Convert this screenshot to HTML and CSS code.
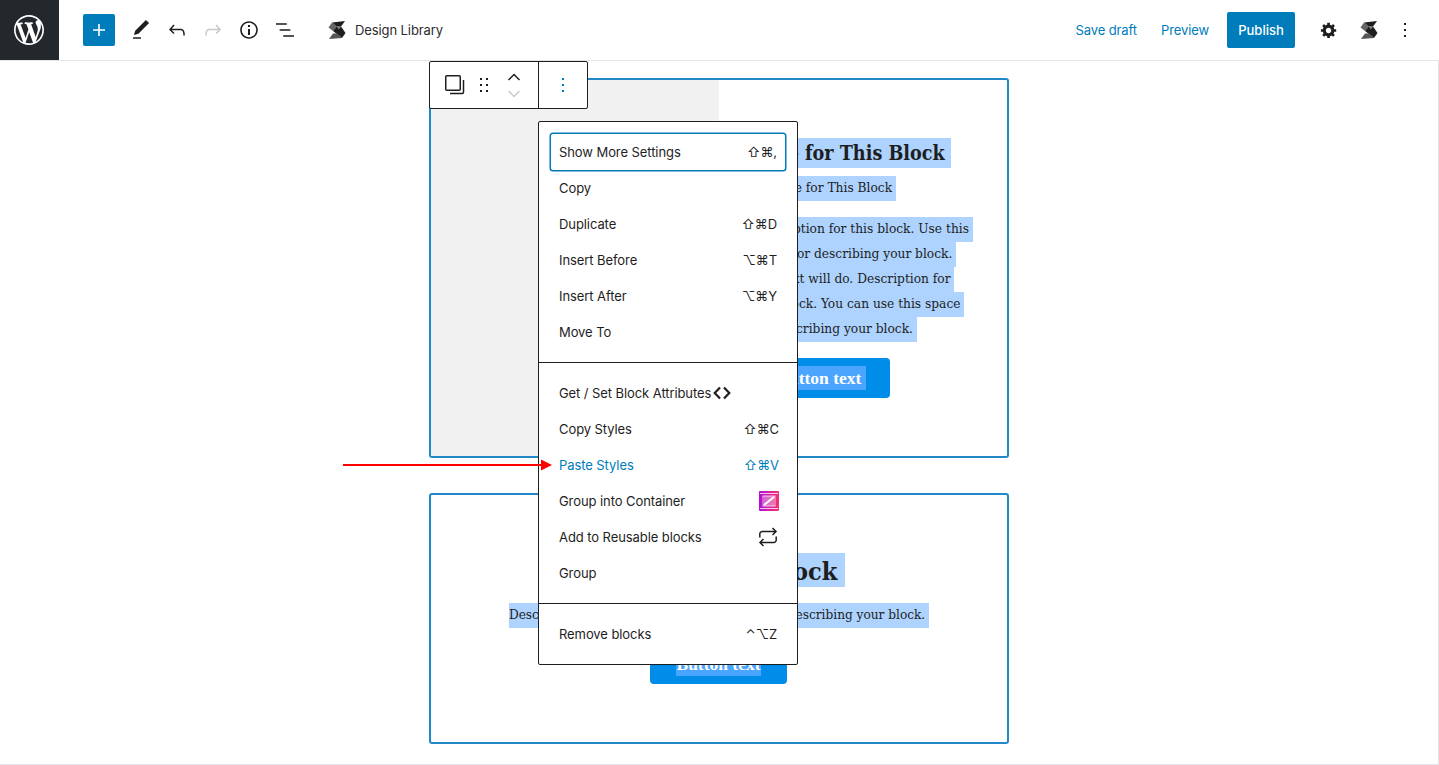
FILE: index.html
```html
<!DOCTYPE html>
<html lang="en">
<head>
<meta charset="utf-8">
<title>Design Library</title>
<link rel="stylesheet" href="styles.css">
</head>
<body>
<div class="app">
  <header class="topbar">
    <div class="bar-left">
      <div class="wp-logo">
        <svg width="30" height="30" viewBox="0 0 20 20" fill="#fff"><path d="M20 10c0-5.51-4.49-10-10-10C4.48 0 0 4.49 0 10c0 5.52 4.48 10 10 10 5.51 0 10-4.48 10-10zM7.78 15.37L4.37 6.22c.55-.02 1.17-.08 1.17-.08.5-.06.44-1.13-.06-1.11 0 0-1.45.11-2.37.11-.18 0-.37 0-.58-.01C4.12 2.69 6.87 1.11 10 1.11c2.33 0 4.45.87 6.05 2.34-.68-.11-1.65.39-1.65 1.58 0 .74.45 1.36.9 2.1.35.61.55 1.36.55 2.46 0 1.49-1.4 5-1.4 5l-3.03-8.37c.54-.02.82-.17.82-.17.5-.05.44-1.25-.06-1.22 0 0-1.44.12-2.38.12-.87 0-2.33-.12-2.33-.12-.5-.03-.56 1.2-.06 1.22l.92.08 1.26 3.41zM17.41 10c.24-.64.74-1.87.43-4.25.7 1.29 1.05 2.71 1.05 4.25 0 3.29-1.73 6.24-4.4 7.78.97-2.59 1.94-5.2 2.92-7.78zM6.1 18.09C3.12 16.65 1.11 13.53 1.11 10c0-1.3.23-2.48.72-3.59C3.25 10.3 4.67 14.2 6.1 18.09zm4.03-6.63l2.58 6.98c-.86.29-1.76.45-2.71.45-.79 0-1.57-.11-2.29-.33.81-2.38 1.62-4.74 2.42-7.1z"/></svg>
      </div>
      <div class="tools">
        <button class="add-btn"><svg width="24" height="24" viewBox="0 0 24 24" fill="#fff"><path d="M18 11.2h-5.2V6h-1.6v5.2H6v1.6h5.2V18h1.6v-5.2H18z"/></svg></button>
        <button class="tool"><svg width="24" height="24" viewBox="0 0 24 24" fill="#1e1e1e"><path d="M20.1 5.1L16.9 2 6.2 12.7l-1.3 4.4 4.5-1.3L20.1 5.1zM4 20.8h8v-1.5H4v1.5z"/></svg></button>
        <button class="tool"><svg width="24" height="24" viewBox="0 0 24 24" fill="#1e1e1e"><path d="M18.3 11.7c-.6-.6-1.4-.9-2.3-.9H6.7l2.9-3.3-1.1-1-4.5 5L8.5 16l1-1-2.7-2.7H16c.5 0 .9.2 1.3.5 1 1 1 3.4 1 4.5v.3h1.5v-.2c0-1.5 0-4.3-1.5-5.7z"/></svg></button>
        <button class="tool"><svg width="24" height="24" viewBox="0 0 24 24" fill="#c9c9c9"><path d="M15.6 6.5l-1.1 1 2.9 3.3H8c-.9 0-1.7.3-2.3.9-1.4 1.5-1.4 4.2-1.4 5.6v.2h1.5v-.3c0-1.1 0-3.5 1-4.5.3-.3.7-.5 1.3-.5h9.2L14.5 15l1.1 1.1 4.6-4.6-4.6-5z"/></svg></button>
        <button class="tool"><svg width="24" height="24" viewBox="0 0 24 24" fill="#1e1e1e"><path d="M12 3.2c-4.8 0-8.8 3.9-8.8 8.8 0 4.8 3.9 8.8 8.8 8.8 4.8 0 8.8-3.9 8.8-8.8 0-4.8-4-8.8-8.8-8.8zm0 16c-4 0-7.2-3.3-7.2-7.2C4.8 8 8 4.8 12 4.8s7.2 3.3 7.2 7.2c0 4-3.2 7.2-7.2 7.2zM11 17h2v-6h-2v6zm0-8h2V7h-2v2z"/></svg></button>
        <button class="tool"><svg width="24" height="24" viewBox="0 0 24 24" fill="#1e1e1e"><path d="M13.8 5.2H3v1.5h10.8V5.2zm-3.6 12v1.5H21v-1.5H10.2zm7.2-6H6.6v1.5h10.8v-1.5z"/></svg></button>
      </div>
      <div class="library">
        <svg width="18" height="18" viewBox="0 0 18 18"><path fill="#1e1e1e" d="M4 1.500L17 0l-4 5.500H8.500z"/><path fill="#666" d="M0.500 6.500L4 1.500l4.500 4L5 10z"/><path fill="#1e1e1e" d="M5 10l3.500-4.500H13l4.500 6.500L14 17z"/><path fill="#888" d="M8.500 5.500H13l-2.200 3z"/><path fill="#555" d="M1 18l4-5.500h4.500L14 17z"/></svg>
        <span>Design Library</span>
      </div>
    </div>
    <div class="bar-right">
      <a class="link save">Save draft</a>
      <a class="link preview">Preview</a>
      <button class="publish">Publish</button>
      <button class="tool right-cog"><svg width="18" height="18" viewBox="0 0 20 20" fill="#1e1e1e"><path d="M18 12h-2.180c-.17.7-.44 1.350-.81 1.930l1.540 1.540-2.100 2.100-1.540-1.540c-.58.36-1.230.63-1.910.79V19H8v-2.180c-.68-.16-1.330-.43-1.910-.79l-1.540 1.540-2.120-2.120 1.540-1.540c-.36-.58-.63-1.230-.79-1.910H1V9.030h2.170c.16-.7.44-1.350.8-1.940L2.430 5.550l2.100-2.100 1.540 1.540c.58-.37 1.240-.64 1.930-.81V2h3v2.180c.68.16 1.330.43 1.910.79l1.540-1.540 2.120 2.120-1.540 1.540c.36.59.64 1.240.8 1.940H18V12zm-8.500 1.500c1.660 0 3-1.340 3-3s-1.340-3-3-3-3 1.340-3 3 1.340 3 3 3z"/></svg></button>
      <button class="tool right-s"><svg width="18" height="18" viewBox="0 0 18 18"><path fill="#1e1e1e" d="M4 1.500L17 0l-4 5.500H8.500z"/><path fill="#666" d="M0.500 6.500L4 1.500l4.500 4L5 10z"/><path fill="#1e1e1e" d="M5 10l3.500-4.500H13l4.500 6.500L14 17z"/><path fill="#888" d="M8.500 5.500H13l-2.200 3z"/><path fill="#555" d="M1 18l4-5.500h4.500L14 17z"/></svg></button>
      <button class="tool right-more"><svg width="24" height="24" viewBox="0 0 24 24" fill="#1e1e1e"><path d="M13 19h-2v-2h2v2zm0-6h-2v-2h2v2zm0-6h-2V5h2v2z"/></svg></button>
    </div>
  </header>

  <main class="canvas">
    <section class="block block-media">
      <div class="media"></div>
      <div class="media-body">
        <h2 class="title"><span class="sel">Title for This Block </span></h2>
        <p class="subtitle"><span class="sel sel-text">Subtitle for This Block </span></p>
        <div class="desc">
          <span class="sel sel-text">Description for this block. Use this </span>
          <span class="sel sel-text">space for describing your block. </span>
          <span class="sel sel-text">Any text will do. Description for </span>
          <span class="sel sel-text">this block. You can use this space </span>
          <span class="sel sel-text">for describing your block. </span>
        </div>
        <a class="cta"><span class="sel-btn">Button text </span></a>
      </div>
    </section>

    <section class="block block-center">
      <h2 class="title-lg"><span class="sel">Title for This Block </span></h2>
      <p class="center-desc"><span class="sel sel-text">Description for this block. Use this space for describing your block. </span></p>
      <a class="cta cta-center"><span class="sel-btn">Button text</span></a>
    </section>

    <div class="block-toolbar">
      <div class="tb-group">
        <svg class="tb-type" width="20" height="20" viewBox="0 0 20 20" fill="none" stroke="#1e1e1e" stroke-width="1.500"><rect x="0.750" y="0.750" width="14.500" height="14.500" rx="1"/><path d="M18.500 5v12.300a1.200 1.200 0 0 1-1.200 1.200H5"/></svg>
        <svg class="tb-drag" width="18" height="18" viewBox="0 0 18 18" fill="#1e1e1e"><path d="M5 4h2V2H5v2zm6-2v2h2V2h-2zm-6 8h2V8H5v2zm6 0h2V8h-2v2zm-6 6h2v-2H5v2zm6 0h2v-2h-2v2z"/></svg>
        <div class="tb-move">
          <svg width="16" height="8" viewBox="0 0 16 8" fill="none" stroke="#1e1e1e" stroke-width="1.500"><path d="M2.500 7L8 1.500 13.500 7"/></svg>
          <svg width="16" height="8" viewBox="0 0 16 8" fill="none" stroke="#c9c9c9" stroke-width="1.500"><path d="M2.500 1L8 6.500 13.500 1"/></svg>
        </div>
      </div>
      <div class="tb-more">
        <svg width="24" height="24" viewBox="0 0 24 24" fill="#007cba"><path d="M13 19h-2v-2h2v2zm0-6h-2v-2h2v2zm0-6h-2V5h2v2z"/></svg>
      </div>
    </div>

    <div class="menu">
      <div class="menu-section">
        <div class="item item-focus"><span>Show More Settings</span><kbd>⇧⌘,</kbd></div>
        <div class="item"><span>Copy</span></div>
        <div class="item"><span>Duplicate</span><kbd>⇧⌘D</kbd></div>
        <div class="item"><span>Insert Before</span><kbd>⌥⌘T</kbd></div>
        <div class="item"><span>Insert After</span><kbd>⌥⌘Y</kbd></div>
        <div class="item"><span>Move To</span></div>
      </div>
      <div class="menu-section">
        <div class="item item-start"><span>Get / Set Block Attributes</span><svg width="18" height="14" viewBox="0 0 18 14" fill="none" stroke="#1e1e1e" stroke-width="2.200"><path d="M7 1.500L1.700 7 7 12.500M11 1.500L16.300 7 11 12.500"/></svg></div>
        <div class="item"><span>Copy Styles</span><kbd class="kbd-wide">⇧⌘C</kbd></div>
        <div class="item item-active"><span>Paste Styles</span><kbd class="kbd-wide">⇧⌘V</kbd></div>
        <div class="item"><span>Group into Container</span>
          <svg class="crate" width="20" height="20" viewBox="0 0 20 20" fill="none">
            <defs><linearGradient id="crate" x1="0" y1="0" x2="1" y2="0"><stop offset="0" stop-color="#b00fd8"/><stop offset="1" stop-color="#f5336f"/></linearGradient></defs>
            <rect width="20" height="20" rx="1" fill="url(#crate)"/>
            <rect x="3" y="5" width="14" height="10" fill="#fff" fill-opacity=".35"/>
            <path d="M1 2.500h18M1 17.500h18M3.500 5h13M3.500 15h13" stroke="#fff" stroke-opacity=".75" stroke-width="1"/>
            <path d="M5 14L15 6" stroke="#fff" stroke-width="2"/>
          </svg>
        </div>
        <div class="item"><span>Add to Reusable blocks</span><svg class="repeat" width="24" height="24" viewBox="0 0 24 24" fill="none" stroke="#1e1e1e" stroke-width="1.500"><path d="M3.800 12.500V9a2.500 2.500 0 0 1 2.500-2.500H20M16.500 3l3.500 3.500-3.500 3.500M20.200 11.500V15a2.500 2.500 0 0 1-2.500 2.500H4M7.500 14L4 17.500 7.500 21"/></svg></div>
        <div class="item"><span>Group</span></div>
      </div>
      <div class="menu-section">
        <div class="item"><span>Remove blocks</span><kbd>⌃⌥Z</kbd></div>
      </div>
    </div>

    <svg class="arrow" width="209" height="12" viewBox="0 0 209 12"><path d="M0 5h198v2H0z" fill="#f00"/><path d="M198 0.500L209 6l-11 5.500z" fill="#f00"/></svg>
  </main>
</div>
</body>
</html>
```

FILE: styles.css
```css
* { box-sizing: border-box; }
html, body { margin: 0; height: 100%; background: #fff; }
body { font-family: Inter, "Liberation Sans", "DejaVu Sans", sans-serif; font-size: 13px; color: #1e1e1e; overflow: hidden; }
button { border: 0; background: none; padding: 0; font: inherit; display: flex; align-items: center; justify-content: center; }
.app { height: 765px; display: flex; flex-direction: column; }

.topbar { height: 61px; flex: none; display: flex; justify-content: space-between; border-bottom: 1px solid #e2e4e7; }
.bar-left, .bar-right, .tools, .library { display: flex; align-items: center; }
.wp-logo { width: 59px; height: 60px; padding-right: 1px; background: #23282d; display: flex; align-items: center; justify-content: center; }
.tools { margin-left: 24px; }
.add-btn { width: 32px; height: 32px; background: #007cba; border-radius: 2px; margin-right: 8px; }
.tool { width: 36px; height: 36px; }
.library { margin-left: 25px; gap: 9px; letter-spacing: -0.1px; color: #2c2c2c; }
.bar-right { padding-right: 16px; }
.link { color: #007cba; letter-spacing: -0.1px; }
.save { margin-right: 24px; }
.preview { margin-right: 18px; }
.publish { width: 68px; height: 36px; background: #007cba; color: #fff; border-radius: 2px; font-weight: 500; margin-right: 16px; }
.right-s { margin-left: 4px; }

.canvas { position: relative; flex: 1; display: flex; flex-direction: column; align-items: center; padding-top: 17px; gap: 35px; border-bottom: 1px solid #e2e4e7; border-right: 1px solid #e2e4e7; }
.block { width: 580px; border: 2px solid #2289c9; border-radius: 3px; font-family: "DejaVu Serif Condensed", "DejaVu Serif", serif; color: #1e1e1e; }
.sel { display: block; background: #add3fe; white-space: pre; }
.sel-text { line-height: 23px; padding-bottom: 2px; }
.block-media { height: 380px; display: grid; grid-template-columns: 288px 1fr; }
.media { background: #f1f1f1; }
.media-body { padding: 58px 30px 0 34px; display: flex; flex-direction: column; align-items: flex-start; }
.title { margin: 0; font: 700 19.600px/30px "DejaVu Serif Condensed", "DejaVu Serif", serif; white-space: nowrap; }
.title .sel { line-height: 28px; padding-top: 2px; }
.subtitle { margin: 8px 0 16px; font: 13.600px/25px "DejaVu Serif Condensed", "DejaVu Serif", serif; white-space: nowrap; }
.desc { display: flex; flex-direction: column; align-items: flex-start; font: 13.600px/25px "DejaVu Serif Condensed", "DejaVu Serif", serif; white-space: pre; }
.cta { width: 137px; height: 40px; margin-top: 16px; background: #008de9; border-radius: 4px; color: #fff; font: 700 17.500px/24px "Liberation Serif", serif; display: flex; align-items: center; justify-content: center; }
.cta-center { margin-right: 1px; }
.sel-btn { display: block; background: #4aa5ff; white-space: pre; }

.block-center { height: 251px; display: flex; flex-direction: column; align-items: center; padding-top: 58px; }
.title-lg { margin: 0; font: 700 25px/34px "DejaVu Serif Condensed", "DejaVu Serif", serif; white-space: nowrap; }
.title-lg .sel { line-height: 30px; padding-top: 4px; }
.center-desc { margin: 16px 0 0; font: 13.500px/25px "DejaVu Serif Condensed", "DejaVu Serif", serif; white-space: nowrap; }

.block-toolbar { position: absolute; left: 429px; top: 0; width: 159px; height: 48px; background: #fff; border: 1px solid #1e1e1e; border-radius: 2px; display: flex; }
.tb-group { width: 109px; display: flex; align-items: center; border-right: 1px solid #1e1e1e; padding-left: 15px; }
.tb-drag { margin-left: 10px; }
.tb-move { display: flex; flex-direction: column; align-items: center; gap: 9px; margin-left: 13px; }
.tb-more { flex: 1; display: flex; align-items: center; justify-content: center; }

.menu { position: absolute; left: 538px; top: 60px; width: 260px; background: #fff; border: 1px solid #1e1e1e; border-radius: 2px; }
.menu-section { padding: 12px; }
.menu-section + .menu-section { border-top: 1px solid #1e1e1e; }
.item { height: 36px; padding: 0 8px; display: flex; align-items: center; justify-content: space-between; color: #1e1e1e; white-space: nowrap; letter-spacing: -0.08px; }
.item-focus { box-shadow: 0 0 0 1.500px #007cba; border-radius: 2px; }
.item-start { justify-content: flex-start; gap: 2px; }
.item-active { color: #007cba; }
kbd { font-family: Inter, "DejaVu Sans", sans-serif; font-size: 13px; }
.kbd-wide { margin-right: -2px; }
.crate { margin-right: -2px; }
.repeat { margin-right: -3px; }

.arrow { position: absolute; left: 343px; top: 398px; }
```
